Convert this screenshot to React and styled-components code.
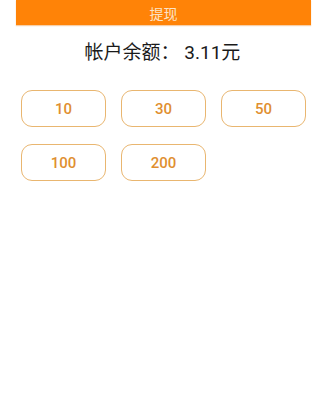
import styled, { createGlobalStyle } from "styled-components";

const GlobalStyle = createGlobalStyle`
  * { box-sizing: border-box; }
  body {
    margin: 0;
    background: #ffffff;
    font-family: Roboto, "Noto Sans CJK SC", sans-serif;
  }
`;

const amounts = [10, 30, 50, 100, 200];

export default function App() {
  return (
    <>
      <GlobalStyle />
      <Page>
        <TopBar>提现</TopBar>
        <Balance>帐户余额：&nbsp;3.11元</Balance>
        <Amounts>
          {amounts.map((a) => (
            <AmountBtn key={a}>{a}</AmountBtn>
          ))}
        </Amounts>
      </Page>
    </>
  );
}

const Page = styled.div`
  width: 318px;
  height: 417px;
  display: flex;
  flex-direction: column;
`;

const TopBar = styled.div`
  height: 25px;
  margin: 0 7px 0 16px;
  background-color: #ff8307;
  color: #fbe3c8;
  font-size: 14px;
  display: flex;
  align-items: center;
  justify-content: center;
  box-shadow: 0 1px 1px rgba(240, 160, 80, 0.5);
`;

const Balance = styled.div`
  margin-top: 12px;
  height: 28px;
  text-align: center;
  font-size: 19px;
  color: #1a1a1a;
  padding-left: 7px;
`;

const Amounts = styled.div`
  margin-top: 25px;
  padding-left: 21px;
  display: grid;
  grid-template-columns: repeat(3, 85px);
  column-gap: 15px;
  row-gap: 17px;
`;

const AmountBtn = styled.button`
  height: 37px;
  background: #ffffff;
  border: 1.5px solid #e9b670;
  border-radius: 11px;
  color: #e08f30;
  font-family: Roboto, sans-serif;
  font-weight: 500;
  font-size: 15px;
  padding: 0;
`;
